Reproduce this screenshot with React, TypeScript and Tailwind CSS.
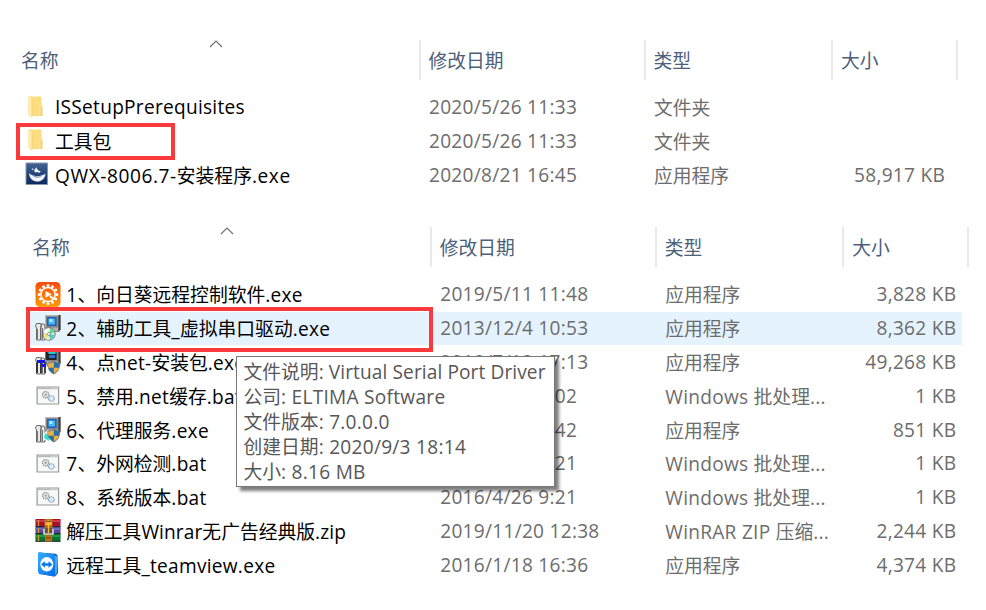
import type { ReactNode } from "react";

type IconKind = "folder" | "shield" | "sunflower" | "setup" | "setupBlue" | "setupShield" | "batch" | "winrar" | "teamviewer";
type Fit = "normal" | "tight" | "wide";

interface FileItem {
  icon: IconKind;
  name: string;
  date: string;
  type: string;
  size: string;
  active?: boolean;
  fit?: Fit;
}

const packageFiles: FileItem[] = [
  { icon: "folder", name: "ISSetupPrerequisites", date: "2020/5/26 11:33", type: "文件夹", size: "" },
  { icon: "folder", name: "工具包", date: "2020/5/26 11:33", type: "文件夹", size: "" },
  { icon: "shield", name: "QWX-8006.7-安装程序.exe", date: "2020/8/21 16:45", type: "应用程序", size: "58,917 KB", fit: "wide" },
];

const toolFiles: FileItem[] = [
  { icon: "sunflower", name: "1、向日葵远程控制软件.exe", date: "2019/5/11 11:48", type: "应用程序", size: "3,828 KB" },
  { icon: "setup", name: "2、辅助工具_虚拟串口驱动.exe", date: "2013/12/4 10:53", type: "应用程序", size: "8,362 KB", active: true },
  { icon: "setupBlue", name: "4、点net-安装包.exe", date: "2018/7/12 17:13", type: "应用程序", size: "49,268 KB" },
  { icon: "batch", name: "5、禁用.net缓存.bat", date: "2018/4/12 9:02", type: "Windows 批处理...", size: "1 KB" },
  { icon: "setupShield", name: "6、代理服务.exe", date: "2018/8/10 9:42", type: "应用程序", size: "851 KB" },
  { icon: "batch", name: "7、外网检测.bat", date: "2016/4/26 9:21", type: "Windows 批处理...", size: "1 KB" },
  { icon: "batch", name: "8、系统版本.bat", date: "2016/4/26 9:21", type: "Windows 批处理...", size: "1 KB" },
  { icon: "winrar", name: "解压工具Winrar无广告经典版.zip", date: "2019/11/20 12:38", type: "WinRAR ZIP 压缩...", size: "2,244 KB", fit: "tight" },
  { icon: "teamviewer", name: "远程工具_teamview.exe", date: "2016/1/18 16:36", type: "应用程序", size: "4,374 KB" },
];

const details: { text: string; fit?: Fit }[] = [
  { text: "文件说明: Virtual Serial Port Driver", fit: "tight" },
  { text: "公司: ELTIMA Software" },
  { text: "文件版本: 7.0.0.0" },
  { text: "创建日期: 2020/9/3 18:14" },
  { text: "大小: 8.16 MB" },
];

const tracking: Record<Fit, string> = {
  tight: "tracking-[0.1px]",
  normal: "tracking-[0.27px]",
  wide: "tracking-[0.58px]",
};

// Latin runs are set a little larger than the Chinese glyphs beside them.
function Mixed({ children, fit = "normal" }: { children: string; fit?: Fit }) {
  const runs = children.match(/[\u3000-\u9fff]+|[^\u3000-\u9fff]+/g) ?? [];
  return (
    <span className="inline-block whitespace-pre pt-[1.500px] align-top">
      {runs.map((run, i) =>
        /[\u3000-\u9fff]/.test(run) ? (
          <span key={i} className="font-['Noto_Sans_CJK_SC',sans-serif] text-[18.8px]">{run}</span>
        ) : (
          <span key={i} className={`font-['Open_Sans','Noto_Sans',sans-serif] text-[19.1px] ${tracking[fit]}`}>{run}</span>
        ),
      )}
    </span>
  );
}

function Setup({ children }: { children?: ReactNode }) {
  return (
    <svg viewBox="0 0 26 26" className="size-[26px] shrink-0">
      <path d="M10.500 0h15v14.500l-2 2.500H12l-1.500-3z" fill="#858585" />
      <path d="M10.500 0h13v1.300h-13z" fill="#b5b5b5" />
      <path d="M23.500 0h2v14.500l-2 2.500z" fill="#3d3d3d" />
      <path d="M12 2h9.500v9H12z" fill="#1b62bd" />
      <path d="M13.500 3.500h6.500v6h-6.500z" fill="#45b7f5" />
      <path d="M14.500 4h3v3h-3z" fill="#a9edff" />
      <path d="M12 12.500h11v3.500H12z" fill="#b4b4b4" />
      <path d="M1.500 8.500h4l1 2-1 2.500v12h-4V13L.5 11zM6 9h3l1 3v13H6z" fill="#e8e8e8" stroke="#6b6b6b" />
      <path d="M2.500 14v10M7.500 13v11" stroke="#555" strokeWidth=".8" />
      {children}
    </svg>
  );
}

function Shield() {
  return (
    <g>
      <path d="M18.800 12c2 1.500 3.700 1.900 6 2 0 6-2 9-6 11-4.200-2-6-5-6-11 2.300-.1 4-.5 6-2z" fill="#2a6ea5" stroke="#777" strokeWidth=".8" />
      <path d="M18.800 12.800v6h-5.300c-.4-1.300-.5-2.800-.5-4.400 2.200-.1 4-.4 5.800-1.600zM18.800 18.800h5.300c-.8 2.500-2.700 4.200-5.300 5.400z" fill="#edb044" />
    </g>
  );
}

function FileIcon({ kind }: { kind: IconKind }) {
  switch (kind) {
    case "folder":
      return (
        <svg viewBox="0 0 26 26" className="size-[26px] shrink-0">
          <path d="M4.500 1.500h13v19.500h-13z" fill="#fbdc80" />
          <path d="M16.500 11.500h2V21h-2z" fill="#f5ce67" />
          <path d="M4 1.500 8 4v18.500L4.200 20l-.2-1z" fill="#ffecb0" />
          <path d="M8 4v18.500" stroke="#f0cf70" strokeWidth=".7" />
          <path d="M16 12v8.500" stroke="#ffe9a3" />
        </svg>
      );
    case "shield":
      return (
        <svg viewBox="0 0 26 26" className="size-[26px] shrink-0">
          <defs><linearGradient id="navy" x2="0" y2="1"><stop stopColor="#426493" /><stop offset="1" stopColor="#0b2861" /></linearGradient></defs>
          <path d="M2 1h21.500v21.500H2z" fill="url(#navy)" stroke="#8798ac" />
          <path d="M5 10.500c1 3.700 11 5 16.500 1.200-.5 5-4 8-8.700 7.800C8.400 19.300 5.200 16 5 10.500z" fill="#f1f4f8" />
          <path d="M8 12.800c3 1.800 7 2.300 10 1-2.400 2.700-7.500 2.600-10-1z" fill="#8197b9" />
          <path d="m10 8.500 2.400-3.200 1.200 2.500 3.200 2-1.600 1-2.200-.7-1.700.5z" fill="#f1f4f8" />
          <path d="m7.500 7 1.500-1 1 1.200-1.500 1z" fill="#b0c2da" />
        </svg>
      );
    case "sunflower":
      return (
        <svg viewBox="0 0 26 26" className="size-[26px] shrink-0">
          <defs><linearGradient id="orange" x2="0" y2="1"><stop stopColor="#f84911" /><stop offset="1" stopColor="#ff9c00" /></linearGradient></defs>
          <rect x=".5" y="0" width="25" height="25" rx="4.500" fill="url(#orange)" />
          <g fill="#fff">
            {[0, 30, 60, 90, 120, 150, 180, 210, 240, 270, 300, 330].map((a) => (
              <circle key={a} cx="13" cy="3.600" r="1.500" transform={`rotate(${a} 13 12.500)`} />
            ))}
          </g>
          <circle cx="13" cy="12.500" r="7.100" fill="none" stroke="#fff" strokeWidth="1.500" />
          <path d="m10.500 9 6 3.300-6 3.500z" fill="#fff" />
          <path d="m15.500 14.500 3 2.500" stroke="#fff" strokeWidth="2" strokeLinecap="round" />
        </svg>
      );
    case "setup":
      return (
        <Setup>
          <circle cx="14" cy="19" r="6.200" fill="#dbe5dc" stroke="#555" strokeWidth=".8" />
          <path d="M14 19 8.200 17l2-3 3.800-1z" fill="#f8ffff" />
          <path d="m14 19-5.500 1.500 2 3.500 3.500 1z" fill="#efe8b0" />
          <path d="m14 19 2-5.700 3.700 4z" fill="#57e07a" />
          <path d="m14 19 5.500 1.500-4 4.300z" fill="#35cdd0" />
          <path d="m9 19 5 0-2 4z" fill="#f3db55" />
          <circle cx="14" cy="19" r="1.500" fill="#fff" stroke="#5b7b87" strokeWidth=".7" />
        </Setup>
      );
    case "setupBlue":
      return (
        <Setup>
          <path d="M10.500 0h2v11h-2zM12 4h9.500v7H12z" fill="#242424" />
          <path d="M13.500 2h7v3h-7z" fill="#24ced1" />
          <path d="M14 6h6v3h-6z" fill="#2b73d8" />
          <path d="M2 11h8v3H2z" fill="#1516e9" />
          <path d="M2 14v10M6 14v10M10 13v11" stroke="#222" strokeWidth="1.500" />
          <path d="M7 15h4v3H7z" fill="#1516e9" />
          <Shield />
        </Setup>
      );
    case "setupShield":
      return (
        <Setup>
          <path d="m8 17 5-4 3 3v7H8z" fill="#f8ffff" />
          <path d="m10 16 4 2v6l-5-3z" fill="#35dcca" />
          <Shield />
        </Setup>
      );
    case "batch":
      return (
        <svg viewBox="0 0 26 26" className="size-[26px] shrink-0">
          <path d="M2.100 4h21.500v17H2.100z" fill="#f7f8f8" stroke="#989898" strokeWidth="1.200" />
          <path d="M2.500 4.500h21v1.700h-21z" fill="#b8b8b8" />
          <path d="M16.500 5.200h1M19 5.200h1M21.500 5.200h1" stroke="#fff" />
          <circle cx="10.700" cy="11.700" r="3.200" fill="#e3e3e3" stroke="#969696" strokeWidth="1.200" strokeDasharray="1.5 .6" />
          <circle cx="10.700" cy="11.700" r="1" fill="#909090" />
          <path d="m12 14 2 3" stroke="#aaa" />
          <circle cx="16.500" cy="15.500" r="2.800" fill="#d2eafb" stroke="#8da9bd" strokeWidth="1.100" strokeDasharray="1.5 .5" />
          <circle cx="16.500" cy="15.500" r=".8" fill="#fff" />
        </svg>
      );
    case "winrar":
      return (
        <svg viewBox="0 0 26 26" className="size-[26px] shrink-0">
          <path d="M.5 1h25v8H.5z" fill="#a9102c" /><path d="M.5 2h25v2H.5z" fill="#cf3851" />
          <path d="M.5 9h25v7H.5z" fill="#4e4b9d" /><path d="M.5 10h25v2H.5z" fill="#6a68b8" />
          <path d="M.5 16h25v7.500H.5z" fill="#08752f" /><path d="M.5 17h25v2H.5z" fill="#24984b" />
          <path d="M.5 8.500h25M.5 15.500h25M.5 23.300h25" stroke="#33232d" />
          <path d="M3.500 2v6M3.500 10v5M3.500 17v6" stroke="#d49a32" strokeWidth="1.300" />
          <path d="M9.500 1h8v11h-8zM10 17h7v6.500h-7z" fill="#b96c1c" />
          <circle cx="13.500" cy="5.500" r="3.200" fill="#f2b43b" />
          <path d="M11 3.500h5M11 8h5M11 20h5" stroke="#80440f" />
          <path d="M9 11v5h9v-5" fill="none" stroke="#ded7d0" strokeWidth="1.600" />
          <path d="M10.500 10h6v5h-6z" fill="#604c47" />
          <path d="M12.800 5h1.400v10h-1.400z" fill="#f5bd35" />
        </svg>
      );
    case "teamviewer":
      return (
        <svg viewBox="0 0 26 26" className="size-[26px] shrink-0">
          <defs><linearGradient id="tvblue" x2="1" y2="1"><stop stopColor="#35adff" /><stop offset="1" stopColor="#006eea" /></linearGradient></defs>
          <path d="m4 .500 17 1.200 1.500 1.800L23 21l-3 3.500L4 22z" fill="#1762aa" />
          <path d="M3 1.500q0-1.300 1.300-1.200L18 2.200q2 .2 2 2V23q0 1.600-1.700 1.400L4.500 21.500Q3 21 3 19.500z" fill="url(#tvblue)" />
          <path d="m20 3.500 2 1v16L20 23z" fill="#4aa9f3" />
          <ellipse cx="11.800" cy="12.300" rx="6.500" ry="7.300" fill="#f8fcff" />
          <path d="m6 12.300 4-3v2h3.500v-2l4 3.200-4 3.200v-2H10v2z" fill="#087ce6" />
        </svg>
      );
  }
}

function HeaderCell({ children }: { children: string }) {
  return <div className="flex items-center border-l-2 border-[#e9e9e9] pl-2 pt-[0.500px]"><Mixed>{children}</Mixed></div>;
}

function FileList({ files }: { files: FileItem[] }) {
  return (
    <section className="w-[940px]">
      <header className="relative grid h-10 grid-cols-[400.5px_225px_187.5px_127px] border-r-2 border-[#e9e9e9] text-[#4c607a]">
        <div className="flex items-center pl-[3px] pt-[0.500px]"><Mixed>名称</Mixed></div>
        <HeaderCell>修改日期</HeaderCell>
        <HeaderCell>类型</HeaderCell>
        <HeaderCell>大小</HeaderCell>
        <svg viewBox="0 0 14 8" className="absolute left-[190.500px] top-0 h-2 w-3.5" fill="none" stroke="#707070" strokeWidth="1.2"><path d="m1 7 6-6 6 6" /></svg>
      </header>
      <div className="pt-[10.800px]">
        {files.map((file) => (
          <div key={file.name} className={`grid h-[33.800px] w-[933px] grid-cols-[411px_225px_182px_109px] items-center text-[#6d6d6d] ${file.active ? "bg-[#e5f3ff]" : ""}`}>
            <div className="flex items-center gap-[5.500px] pl-[5.500px] text-black">
              <FileIcon kind={file.icon} />
              <Mixed fit={file.fit}>{file.name}</Mixed>
            </div>
            <Mixed>{file.date}</Mixed>
            <Mixed>{file.type}</Mixed>
            <div className="text-right"><Mixed>{file.size}</Mixed></div>
          </div>
        ))}
      </div>
    </section>
  );
}

export default function App() {
  return (
    <main className="relative flex h-[610px] w-[986px] flex-col overflow-hidden bg-white pt-10 leading-[25px]">
      <div className="h-[187px] pl-[18px]"><FileList files={packageFiles} /></div>
      <div className="pl-[29.250px]"><FileList files={toolFiles} /></div>

      <div className="absolute left-[16px] top-[123px] h-[36.500px] w-[159px] border-4 border-[#fb3b3b]" />
      <div className="absolute left-[26px] top-[307px] h-[45px] w-[406.500px] border-4 border-[#fb3b3b]" />
      <aside className="absolute left-[236px] top-[356px] flex h-[131px] w-[319px] flex-col border border-[#777] bg-white pl-[6.500px] pt-[1.500px] text-[#575757] shadow-[4px_4px_3px_rgba(0,0,0,0.5)]">
        {details.map((line) => <div key={line.text} className="flex h-[25px] items-center"><Mixed fit={line.fit}>{line.text}</Mixed></div>)}
      </aside>
    </main>
  );
}
